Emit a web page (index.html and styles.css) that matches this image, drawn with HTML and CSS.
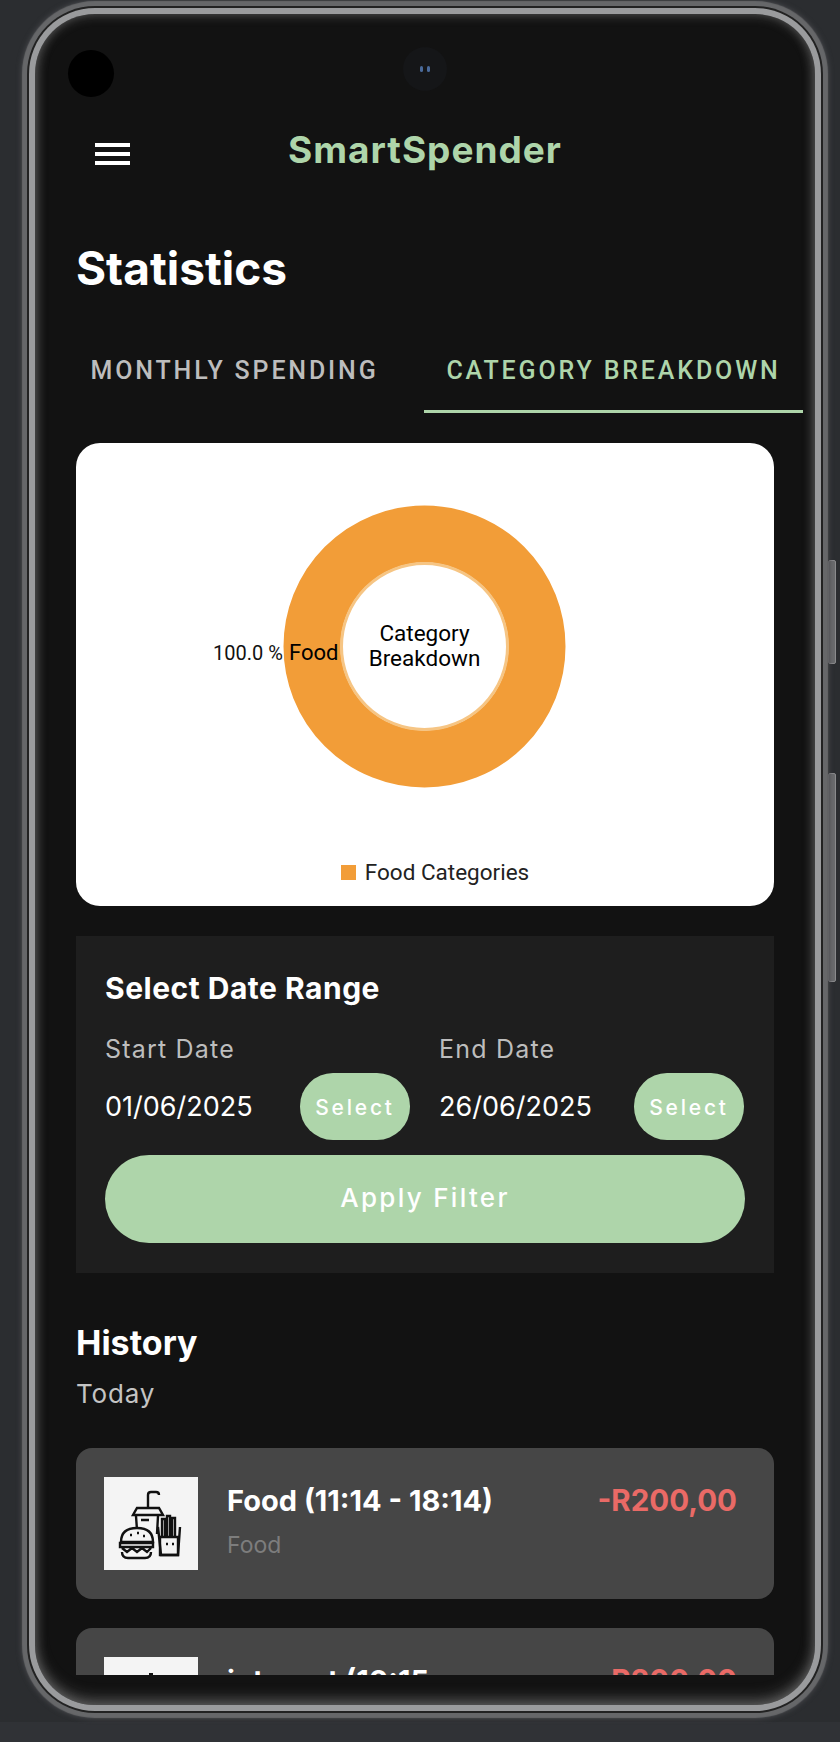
FILE: index.html
```html
<!DOCTYPE html>
<html lang="en">
<head>
    <meta charset="UTF-8">
    <meta name="viewport" content="width=device-width, initial-scale=1.0">
    <title>SmartSpender</title>
    <link rel="stylesheet" href="styles.css">
</head>
<body>
    <span class="side-btn side-btn-top"></span>
    <span class="side-btn side-btn-low"></span>

    <div class="screen">
        <span class="notch-dot"></span>
        <span class="camera"><i></i><i></i></span>

        <div class="content">
            <header class="topbar">
                <button class="menu-btn"><span></span><span></span><span></span></button>
                <div class="app-name">SmartSpender</div>
            </header>

            <h1 class="page-title">Statistics</h1>

            <nav class="tabs">
                <div class="tab">MONTHLY SPENDING</div>
                <div class="tab tab-active">CATEGORY BREAKDOWN</div>
            </nav>

            <section class="chart-card">
                <svg class="donut" width="698" height="400" viewBox="0 0 698 400">
                    <circle cx="348.5" cy="203.5" r="112.5" fill="none" stroke="#f29d38" stroke-width="57"/>
                    <circle cx="348.5" cy="203.5" r="83" fill="none" stroke="#f6c584" stroke-width="3"/>
                    <text class="slice-label" x="137" y="217">100.0 %</text>
                    <text class="slice-food" x="213" y="217">Food</text>
                    <text class="hole-label" x="348.5" y="198">Category</text>
                    <text class="hole-label" x="348.5" y="223">Breakdown</text>
                </svg>
                <div class="legend"><span class="legend-box"></span>Food Categories</div>
            </section>

            <section class="date-panel">
                <h2 class="panel-title">Select Date Range</h2>
                <div class="date-cols">
                    <div class="date-col">
                        <div class="date-label">Start Date</div>
                        <div class="date-row">
                            <span class="date-value">01/06/2025</span>
                            <button class="select-btn">Select</button>
                        </div>
                    </div>
                    <div class="date-col">
                        <div class="date-label">End Date</div>
                        <div class="date-row">
                            <span class="date-value">26/06/2025</span>
                            <button class="select-btn">Select</button>
                        </div>
                    </div>
                </div>
                <button class="apply-btn">Apply Filter</button>
            </section>

            <section class="history">
                <h2 class="history-title">History</h2>
                <div class="history-day">Today</div>

                <div class="item">
                    <div class="thumb">
                        <svg width="94" height="93" viewBox="0 0 94 93" fill="none" stroke="#111" stroke-width="2.4">
                            <path d="M44 30V18q0-3 3-3h5q3 0 3 3"/>
                            <path d="M33 31h22l4 7H29z" fill="#f4f4f4"/>
                            <path d="M32 39l1 14M54 39l-1 18M37 43h8"/>
                            <path d="M17 65q0-14 16-14t16 14z" fill="#f4f4f4"/>
                            <path d="M16 66h33v4H16zM18 71l5 4 5-4 5 4 5-4 5 4 4-4M18 75q0 6 6 6h17q6 0 6-6"/>
                            <path d="M26 58h2M33 56h2M39 59h2"/>
                            <path d="M58 60V42h3v18M63 60V39h3v21M68 60V41h3v19M54 50l3 28h17l2-28"/>
                            <path d="M56 60h18v18H56zM62 67h2M68 67h2"/>
                        </svg>
                    </div>
                    <div class="item-text">
                        <div class="item-name">Food (11:14 - 18:14)</div>
                        <div class="item-cat">Food</div>
                    </div>
                    <div class="item-amount">-R200,00</div>
                </div>

                <div class="item">
                    <div class="thumb">
                        <svg width="94" height="93" viewBox="0 0 94 93" fill="none" stroke="#111" stroke-width="4">
                            <path d="M47 16v12M38 24h18"/>
                        </svg>
                    </div>
                    <div class="item-text">
                        <div class="item-name">internet (10:15</div>
                    </div>
                    <div class="item-amount">-R200,00</div>
                </div>
            </section>
        </div>
    </div>
</body>
</html>
```

FILE: styles.css
```css
* {
    box-sizing: border-box;
}
body {
    margin: 0;
    height: 1742px;
    padding: 14px 0 0 35px;
    background: linear-gradient(to bottom, #2b2d30 1722px, #303236 1722px);
    font-family: "Inter", "Liberation Sans", sans-serif;
    overflow: hidden;
    position: relative;
}
button {
    border: none;
    font-family: inherit;
    padding: 0;
}

/* phone frame */
.screen {
    position: relative;
    width: 780px;
    height: 1691px;
    background: #121212;
    border-radius: 60px;
    box-shadow: inset 0 0 12px rgba(170, 170, 170, .45), inset 0 -8px 14px rgba(150, 150, 150, .3), 0 0 0 6px #9a9b9d, 0 0 0 8px #222, 0 0 1px 13px #666769, 0 0 5px 14px #45464a;
}
.side-btn {
    position: absolute;
    left: 828px;
    width: 8px;
    background: #6a6b6d;
    border: 1px solid #8a8a8c;
    border-radius: 2px;
}
.side-btn-top {
    top: 560px;
    height: 104px;
}
.side-btn-low {
    top: 773px;
    height: 209px;
}
.notch-dot {
    position: absolute;
    left: 33px;
    top: 36px;
    width: 46px;
    height: 47px;
    border-radius: 50%;
    background: #000;
}
.camera {
    position: absolute;
    left: 368px;
    top: 33px;
    width: 44px;
    height: 44px;
    border-radius: 50%;
    background: #151618;
    display: flex;
    align-items: center;
    justify-content: center;
    gap: 4px;
}
.camera i {
    width: 3px;
    height: 6px;
    border-radius: 2px;
    background: #4a6a9a;
}

/* scrolling part, cut off above the chin */
.content {
    height: 1661px;
    overflow: hidden;
}
.topbar {
    position: relative;
    height: 46px;
    padding-top: 113px;
    box-sizing: content-box;
}
.menu-btn {
    position: absolute;
    left: 60px;
    top: 129px;
    width: 35px;
    height: 22px;
    background: none;
    display: flex;
    flex-direction: column;
    justify-content: space-between;
}
.menu-btn span {
    display: block;
    height: 4px;
    background: #fff;
}
.app-name {
    text-align: center;
    color: #aed5aa;
    font-size: 37px;
    font-weight: 700;
    line-height: 46px;
    letter-spacing: 1px;
}
.page-title {
    margin: 67px 41px 0;
    color: #fff;
    font-size: 46px;
    font-weight: 700;
    line-height: 56px;
}
.tabs {
    display: flex;
    margin: 41px 12px 0 10px;
}
.tab {
    flex: 1;
    height: 76px;
    padding-top: 19px;
    text-align: center;
    color: #bdbdbd;
    font-family: "Roboto", sans-serif;
    font-size: 25px;
    font-weight: 500;
    line-height: 30px;
    letter-spacing: 2.85px;
    white-space: nowrap;
}
.tab-active {
    color: #aed5aa;
    border-bottom: 3px solid #aed5aa;
}

/* chart */
.chart-card {
    height: 463px;
    margin: 30px 41px 0;
    background: #fff;
    border-radius: 24px;
}
.donut {
    display: block;
}
.slice-label {
    font-family: "Roboto", sans-serif;
    font-size: 20px;
    fill: #111;
}
.slice-food {
    font-family: "Roboto", sans-serif;
    font-size: 22px;
    fill: #000;
}
.hole-label {
    font-family: "Roboto", sans-serif;
    font-size: 22.5px;
    fill: #000;
    text-anchor: middle;
}
.legend {
    display: flex;
    align-items: center;
    justify-content: center;
    gap: 9px;
    margin-top: 16px;
    padding-left: 20px;
    color: #222;
    font-family: "Roboto", sans-serif;
    font-size: 22.5px;
    line-height: 26px;
}
.legend-box {
    width: 15px;
    height: 15px;
    background: #f29d38;
}

/* date range */
.date-panel {
    height: 337px;
    margin: 30px 41px 0;
    padding: 34px 29px 0;
    background: #1e1e1e;
}
.panel-title {
    margin: 0;
    color: #fff;
    font-size: 30px;
    font-weight: 700;
    line-height: 36px;
    letter-spacing: .5px;
}
.date-cols {
    display: flex;
    gap: 29px;
    margin-top: 28px;
}
.date-col {
    width: 305px;
}
.date-label {
    color: #bdbdbd;
    font-size: 25px;
    line-height: 30px;
    letter-spacing: 1.2px;
}
.date-row {
    display: flex;
    align-items: center;
    justify-content: space-between;
    margin-top: 9px;
}
.date-value {
    color: #fff;
    font-size: 27px;
}
.select-btn {
    width: 110px;
    height: 67px;
    padding-top: 2px;
    border-radius: 33px;
    background: #aed5aa;
    color: #fff;
    font-size: 21px;
    font-weight: 500;
    letter-spacing: 2.8px;
}
.apply-btn {
    display: block;
    width: 100%;
    height: 88px;
    margin-top: 15px;
    padding-bottom: 4px;
    border-radius: 44px;
    background: #aed5aa;
    color: #fff;
    font-size: 26px;
    font-weight: 500;
    letter-spacing: 2.3px;
}

/* history list */
.history {
    margin: 0 41px;
}
.history-title {
    margin: 48px 0 0;
    color: #fff;
    font-size: 34px;
    font-weight: 700;
    line-height: 44px;
}
.history-day {
    margin: 14px 0 39px;
    color: #c4c4c4;
    font-size: 26px;
    line-height: 30px;
    letter-spacing: .8px;
}
.item {
    display: flex;
    height: 151px;
    padding: 29px 37px 0 28px;
    background: #464646;
    border-radius: 16px;
}
.item + .item {
    margin-top: 29px;
}
.thumb {
    flex: none;
    width: 94px;
    height: 93px;
    background: #f4f4f4;
}
.thumb svg {
    display: block;
}
.item-text {
    flex: 1;
    margin-left: 29px;
    min-width: 0;
}
.item-name {
    margin-top: 6px;
    color: #fff;
    font-size: 29px;
    font-weight: 700;
    line-height: 36px;
    white-space: nowrap;
}
.item-cat {
    margin-top: 12px;
    color: #7d7d7d;
    font-size: 23px;
    line-height: 28px;
}
.item-amount {
    margin-top: 5px;
    color: #e96a66;
    font-size: 29.5px;
    font-weight: 700;
    line-height: 36px;
}
```
